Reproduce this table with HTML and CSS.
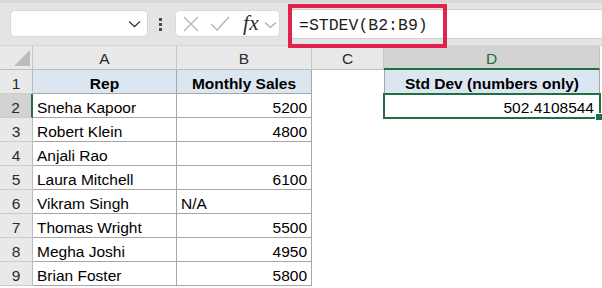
FILE: index.html
```html
<!DOCTYPE html>
<html lang="en">
<head>
<meta charset="utf-8">
<title>STDEV sheet</title>
<link rel="stylesheet" href="styles.css">
</head>
<body>
<div class="toolbar">
  <div class="namebox">
    <svg class="chev" width="13" height="8" viewBox="0 0 13 8"><path d="M1 1.5 L6.5 6.5 L12 1.5" fill="none" stroke="#3a3a3a" stroke-width="1.3"/></svg>
  </div>
  <div class="dots"><i></i><i></i><i></i></div>
  <div class="fxbox">
    <svg class="ico-x" width="16" height="16" viewBox="0 0 16 16"><path d="M1 1 L15 15 M15 1 L1 15" stroke="#b4b4b4" stroke-width="1.3" fill="none"/></svg>
    <svg class="ico-check" width="20" height="15" viewBox="0 0 20 15"><path d="M1 8 L7 14 L19 1" stroke="#b4b4b4" stroke-width="1.3" fill="none"/></svg>
    <span class="fx">fx</span>
    <svg class="ico-chev" width="13" height="8" viewBox="0 0 13 8"><path d="M1 1.5 L6.5 6.5 L12 1.5" fill="none" stroke="#a8a8a8" stroke-width="1.2"/></svg>
  </div>
  <div class="formula"><span class="ftext">=STDEV(B2:B9)</span></div>
</div>

<div class="sheet">
  <div class="corner"><svg width="16" height="16" viewBox="0 0 16 16"><polygon points="16,0 16,16 0,16" fill="#bcbcbc"/></svg></div>
  <div class="ch">A</div>
  <div class="ch">B</div>
  <div class="ch">C</div>
  <div class="ch ch-sel">D</div>

  <div class="rh">1</div>
  <div class="c hd">Rep</div>
  <div class="c hd">Monthly Sales</div>
  <div class="e"></div>
  <div class="c hd dcell">Std Dev (numbers only)</div>

  <div class="rh rh-sel">2</div>
  <div class="c">Sneha Kapoor</div>
  <div class="c num">5200</div>
  <div class="e"></div>
  <div class="c num dsel">502.4108544</div>

  <div class="rh">3</div>
  <div class="c">Robert Klein</div>
  <div class="c num">4800</div>
  <div class="e"></div>
  <div class="e"></div>

  <div class="rh">4</div>
  <div class="c">Anjali Rao</div>
  <div class="c num"></div>
  <div class="e"></div>
  <div class="e"></div>

  <div class="rh">5</div>
  <div class="c">Laura Mitchell</div>
  <div class="c num">6100</div>
  <div class="e"></div>
  <div class="e"></div>

  <div class="rh">6</div>
  <div class="c">Vikram Singh</div>
  <div class="c">N/A</div>
  <div class="e"></div>
  <div class="e"></div>

  <div class="rh">7</div>
  <div class="c">Thomas Wright</div>
  <div class="c num">5500</div>
  <div class="e"></div>
  <div class="e"></div>

  <div class="rh">8</div>
  <div class="c">Megha Joshi</div>
  <div class="c num">4950</div>
  <div class="e"></div>
  <div class="e"></div>

  <div class="rh">9</div>
  <div class="c">Brian Foster</div>
  <div class="c num">5800</div>
  <div class="e"></div>
  <div class="e"></div>
</div>
</body>
</html>
```

FILE: styles.css
```css
* { box-sizing: border-box; }
html, body { margin: 0; padding: 0; }
body {
  width: 602px;
  height: 288px;
  overflow: hidden;
  background: #ffffff;
  font-family: "Liberation Sans", Arial, sans-serif;
}

/* ---------- toolbar ---------- */
.toolbar {
  height: 46px;
  display: flex;
  align-items: flex-start;
  background: linear-gradient(#d9d9d9 0, #d9d9d9 3px, #e4e4e4 3px);
  border-bottom: 1px solid #d6d6d6;
}
.namebox {
  margin-left: 10px;
  margin-top: 10px;
  width: 138px;
  height: 27px;
  background: #ffffff;
  border: 1px solid #d9d9d9;
  border-radius: 5px;
  display: flex;
  align-items: center;
  justify-content: flex-end;
  padding-right: 6px;
}
.chev { display: block; margin-top: 1px; }
.dots {
  margin-left: 11px;
  margin-top: 18px;
  width: 3px;
  display: flex;
  flex-direction: column;
  gap: 2px;
}
.dots i {
  display: block;
  width: 3px;
  height: 3px;
  background: #4a4a4a;
}
.fxbox {
  margin-left: 13px;
  margin-top: 10px;
  width: 105px;
  height: 27px;
  background: #ffffff;
  border: 1px solid #d9d9d9;
  border-radius: 5px;
  display: flex;
  align-items: center;
  padding-left: 7px;
}
.ico-x { display: block; }
.ico-check { display: block; margin-left: 11px; }
.fx {
  margin-left: 13px;
  font-family: "Liberation Serif", "Times New Roman", serif;
  font-style: italic;
  font-size: 21px;
  color: #2b2b2b;
  line-height: 1;
  letter-spacing: 0.5px;
}
.ico-chev { display: block; margin-left: 5px; margin-top: 2px; }

.formula {
  position: relative;
  flex: 1;
  margin-left: 8px;
  margin-top: 9px;
  height: 30px;
  background: #ffffff;
  border-top: 1px solid #cfcfcf;
  border-bottom: 1px solid #cfcfcf;
  display: flex;
  align-items: center;
  padding-left: 11px;
  padding-top: 2px;
}
.formula::before {
  content: "";
  position: absolute;
  left: 0;
  top: -6px;
  width: 151px;
  height: 36px;
  border: 4px solid #e3234f;
}
.ftext {
  font-family: "Liberation Mono", "Courier New", monospace;
  font-size: 16.5px;
  color: #1e1e1e;
  white-space: pre;
}

/* ---------- sheet ---------- */
.sheet {
  display: grid;
  grid-template-columns: 33px 144px 135px 72px 216px;
  grid-auto-rows: 24px;
  width: 600px;
}

.corner {
  background: #e9e9e9;
  border-right: 1px solid #c6c6c6;
  border-bottom: 1px solid #bdbdbd;
  display: flex;
  align-items: flex-end;
  justify-content: flex-end;
  padding: 0 2px 3px 0;
}
.corner svg { display: block; }

.ch {
  background: #e9e9e9;
  border-right: 1px solid #c6c6c6;
  border-bottom: 1px solid #bdbdbd;
  text-align: center;
  font-size: 15.5px;
  color: #2a2a2a;
  line-height: 18px;
  padding-top: 4px;
}
.ch-sel {
  background: #d3d3d3;
  color: #1b6b3e;
  border-bottom: 2px solid #1e6f42;
}

.rh {
  background: #e9e9e9;
  border-right: 1px solid #bdbdbd;
  border-bottom: 1px solid #cbcbcb;
  text-align: center;
  font-size: 15.5px;
  color: #2a2a2a;
  line-height: 18px;
  padding-top: 5px;
}
.rh-sel {
  background: #d3d3d3;
  border-right: 2px solid #1e6f42;
}

.c {
  border-right: 1px solid #a6a6a6;
  border-bottom: 1px solid #a6a6a6;
  font-size: 15.5px;
  color: #000000;
  line-height: 18px;
  padding: 5px 4px 0 4px;
  white-space: nowrap;
  overflow: hidden;
}
.num { text-align: right; }
.hd {
  background: #dce6f1;
  font-weight: bold;
  text-align: center;
  padding-left: 0;
  padding-right: 0;
}
.dcell {
  border-left: 1px solid #a6a6a6;
  border-right: 1px solid #a6a6a6;
  border-bottom: none;
}
.dsel {
  position: relative;
  overflow: visible;
  border: none;
  outline: 2px solid #1e6f42;
  outline-offset: -1px;
  padding-right: 6px;
}
.dsel::after {
  content: "";
  position: absolute;
  right: -3px;
  bottom: -3px;
  width: 6px;
  height: 6px;
  background: #1e6f42;
  border: 1px solid #ffffff;
}
.e { background: #ffffff; }
```
